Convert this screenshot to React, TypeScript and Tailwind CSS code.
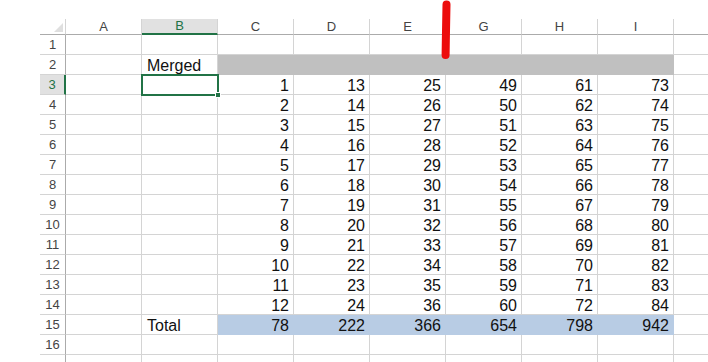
const cols = ["A", "B", "C", "D", "E", "G", "H", "I"];
const starts = [1, 13, 25, 49, 61, 73];

function ColHeader({ label, active }: { label: string; active?: boolean }) {
  return (
    <div
      className={
        "flex items-center justify-center border-r border-r-[#d4d4d4] text-[13px] " +
        (active
          ? "border-b-2 border-b-[#217346] bg-[#e1e1e1] text-[#217346]"
          : "border-b border-b-[#ababab] bg-white text-[#444]")
      }
    >
      {label}
    </div>
  );
}

function RowHeader({ n, active }: { n?: number; active?: boolean }) {
  return (
    <div
      className={
        "flex items-center justify-center border-b border-b-[#d4d4d4] text-[13px] " +
        (active
          ? "border-r-2 border-r-[#217346] bg-[#e1e1e1] text-[#217346]"
          : "border-r border-r-[#ababab] bg-white text-[#444]")
      }
    >
      {n}
    </div>
  );
}

function Cell({ children, right, fill }: { children?: React.ReactNode; right?: boolean; fill?: string }) {
  return (
    <div
      className={
        "flex items-end whitespace-nowrap border-r border-b text-[16px] leading-[16px] text-[#111] " +
        (right ? "justify-end pr-[4px] " : "pl-[5px] ") +
        (fill ?? "border-[#d4d4d4]")
      }
    >
      {children}
    </div>
  );
}

export default function App() {
  const rows = Array.from({ length: 17 }, (_, i) => i + 1);
  return (
    <div className="relative h-[362px] w-[708px] overflow-hidden bg-white pl-[40px] pt-[19px]" style={{ fontFamily: '"Liberation Sans", Arial, sans-serif' }}>
      <div className="grid grid-cols-[26px_repeat(8,76px)_34px] grid-rows-[16px_repeat(17,20px)]">
        <div className="relative border-r border-b border-r-[#d4d4d4] border-b-[#ababab]">
          <svg className="absolute right-[2px] bottom-[2px]" width="9" height="9" viewBox="0 0 9 9">
            <path d="M9 0 L9 9 L0 9 Z" fill="#dfdfdf" />
          </svg>
        </div>
        {cols.map((c) => (
          <ColHeader key={c} label={c} active={c === "B"} />
        ))}
        <div className="border-b border-b-[#ababab]" />

        {rows.map((r) => {
          const cells: React.ReactNode[] = [];
          // row 17 is only partly in view, its number falls below the edge
          cells.push(<RowHeader key={"h" + r} n={r < 17 ? r : undefined} active={r === 3} />);
          cells.push(<Cell key={"a" + r} />);
          if (r === 2) {
            cells.push(<Cell key={"b" + r}>Merged</Cell>);
            cells.push(<div key="m" className="col-span-6 border-r border-b border-[#c0c0c0] bg-[#c0c0c0]" />);
          } else if (r === 3) {
            cells.push(
              <div key="sel" className="relative border-r border-b border-[#d4d4d4]">
                <div className="absolute left-[-1px] top-[-1px] h-[22px] w-[78px] border-2 border-[#217346]" />
                <div className="absolute right-[-4px] bottom-[-4px] size-[6px] border border-white bg-[#217346]" />
              </div>
            );
          } else if (r === 15) {
            cells.push(<Cell key={"b" + r}>Total</Cell>);
          } else {
            cells.push(<Cell key={"b" + r} />);
          }
          if (r !== 2) {
            starts.forEach((s, i) => {
              if (r >= 3 && r <= 14) {
                cells.push(<Cell key={r + "-" + i} right>{s + r - 3}</Cell>);
              } else if (r === 15) {
                let sum = 0;
                for (let k = 0; k < 12; k++) sum += s + k;
                cells.push(
                  <Cell key={r + "-" + i} right fill="border-[#b8cce4] bg-[#b8cce4]">
                    {sum}
                  </Cell>
                );
              } else {
                cells.push(<Cell key={r + "-" + i} />);
              }
            });
          }
          cells.push(<div key={"x" + r} className="border-b border-[#d4d4d4]" />);
          return cells;
        })}
      </div>

      <svg className="absolute left-[438px] top-0" width="16" height="62" viewBox="0 0 16 62">
        <path d="M8.5 4.5 C8.3 20 7.8 38 7.6 55" stroke="#ec0c0c" strokeWidth="8" strokeLinecap="round" fill="none" />
      </svg>
    </div>
  );
}
